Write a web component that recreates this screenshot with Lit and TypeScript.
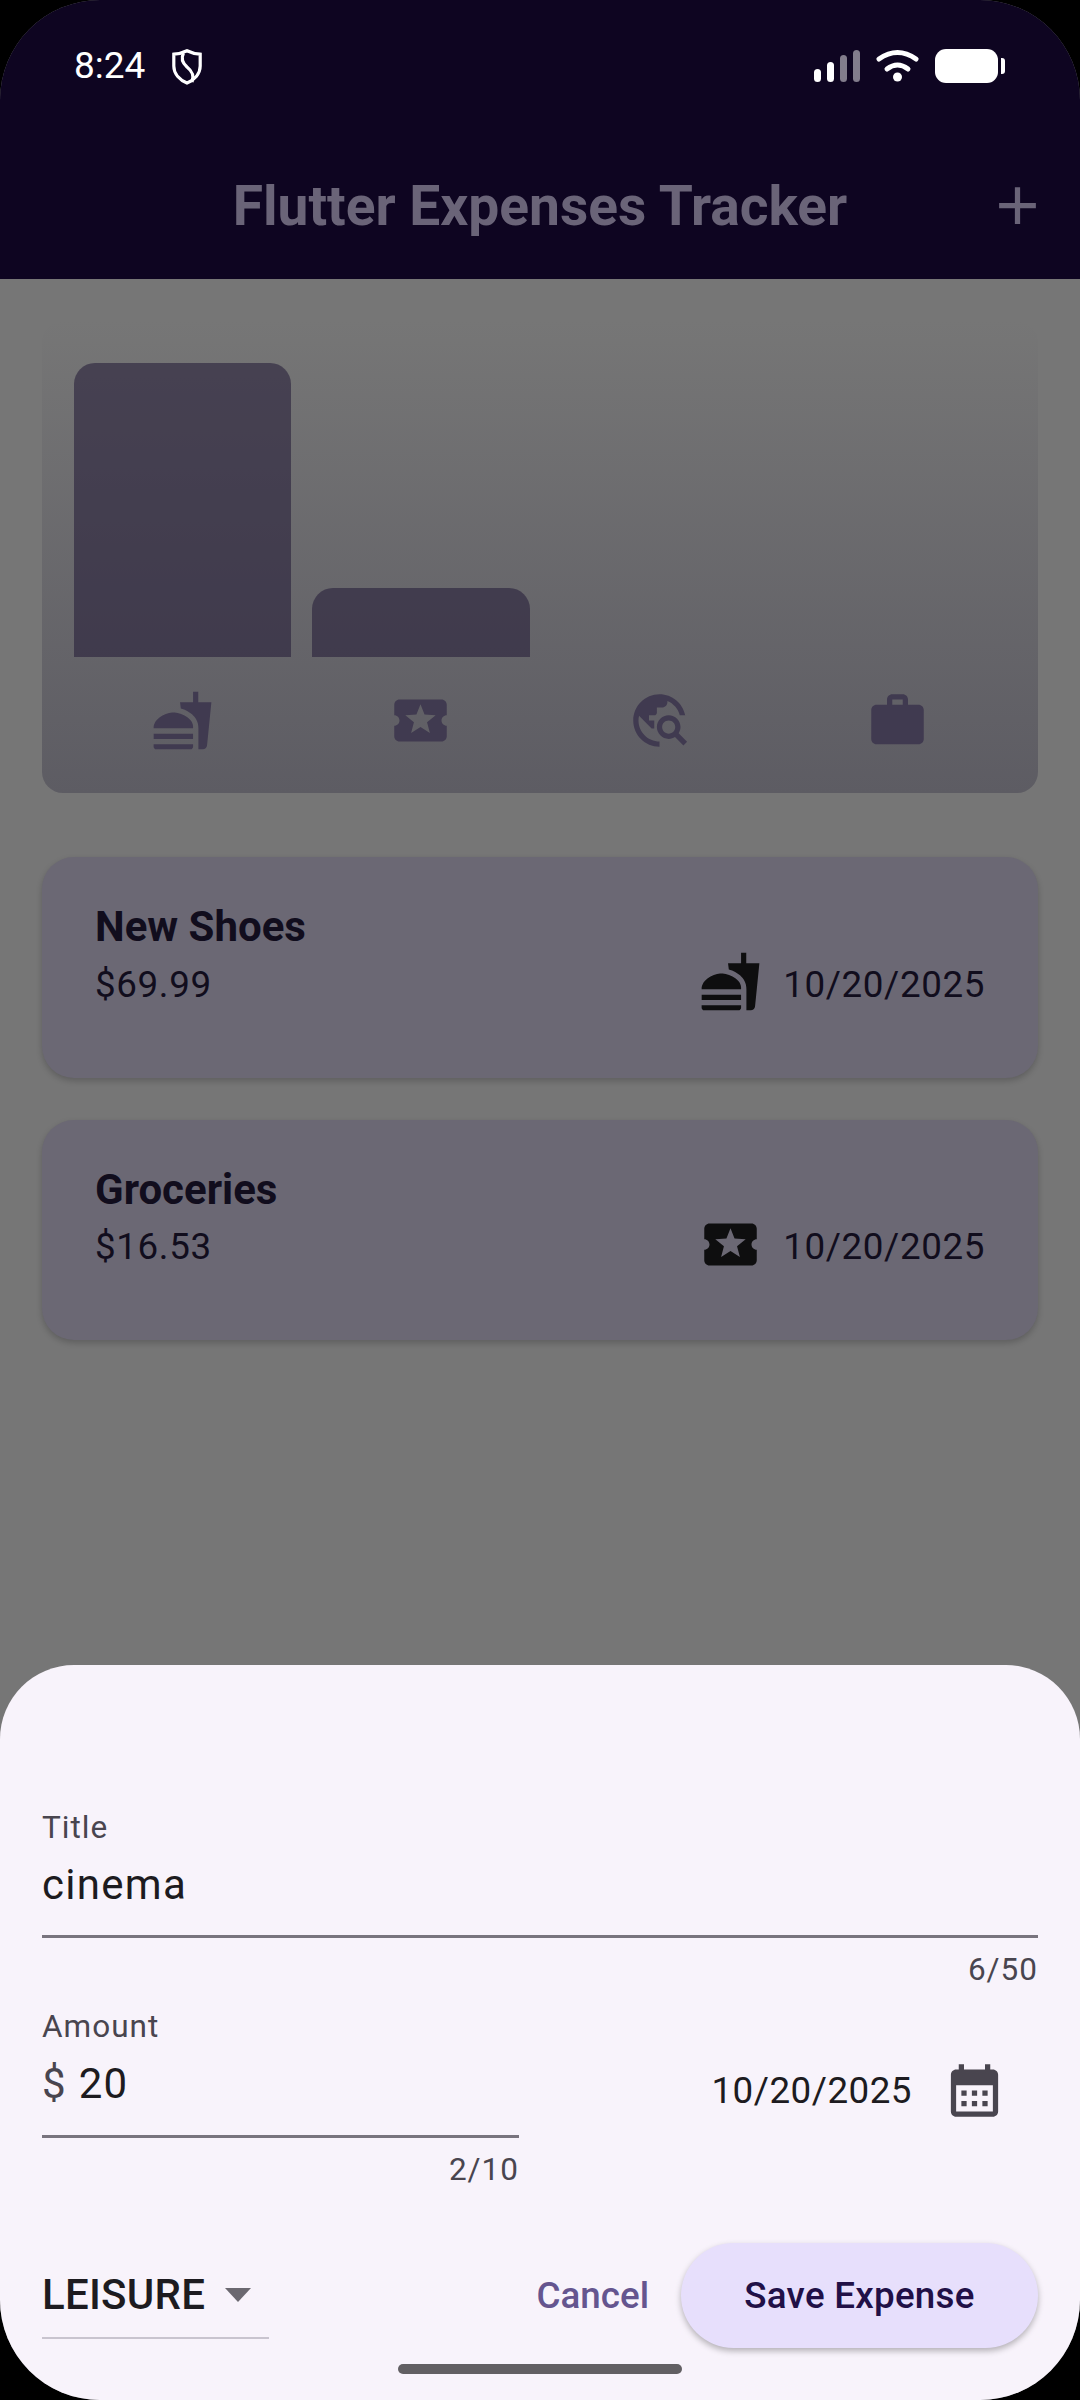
import { LitElement, html, css, svg } from 'lit';
import { customElement } from 'lit/decorators.js';

const ICONS = {
  food: 'M18.06 22.99h1.66c.84 0 1.53-.64 1.63-1.46L23 5.05h-5V1h-1.97v4.05h-4.97l.3 2.34c1.71.47 3.31 1.32 4.27 2.26 1.44 1.42 2.43 2.89 2.43 5.29v8.05zM1 21.99V21h15.03v.99c0 .55-.45 1-1.01 1H2.01c-.56 0-1.01-.45-1.01-1zm15.03-7c.5-4-5-6-7.52-6C5.99 8.99 1 11 1 14.99h15.03zM1.02 17h15v2h-15z',
  leisure: 'M20 12c0-1.1.9-2 2-2V6c0-1.1-.9-2-2-2H4c-1.1 0-1.99.9-1.99 2v4c1.1 0 1.99.9 1.99 2s-.89 2-2 2v4c0 1.1.9 2 2 2h16c1.1 0 2-.9 2-2v-4c-1.1 0-2-.9-2-2zm-4.42 4.8L12 14.5l-3.58 2.3 1.08-4.12-3.29-2.69 4.24-.25L12 5.8l1.54 3.95 4.24.25-3.29 2.69 1.09 4.11z',
  travel: 'M19.3 16.9c.4-.7.7-1.5.7-2.4 0-2.5-2-4.5-4.5-4.5S11 12 11 14.5s2 4.5 4.5 4.5c.9 0 1.7-.3 2.4-.7l3.2 3.2 1.4-1.4-3.2-3.2zm-3.8.1c-1.4 0-2.5-1.1-2.5-2.5s1.1-2.5 2.5-2.5 2.5 1.1 2.5 2.5-1.1 2.5-2.5 2.5zM12 20v2C6.48 22 2 17.52 2 12S6.48 2 12 2c4.84 0 8.87 3.44 9.8 8h-2.07c-.64-2.46-2.4-4.47-4.73-5.41V5c0 1.1-.9 2-2 2h-2v2c0 .55-.45 1-1 1H8v2h2v3H9l-4.79-4.79C4.08 10.79 4 11.38 4 12c0 4.41 3.59 8 8 8z',
  work: 'M20 6h-4V4c0-1.11-.89-2-2-2h-4c-1.11 0-2 .89-2 2v2H4c-1.11 0-1.99.89-1.99 2L2 19c0 1.11.89 2 2 2h16c1.11 0 2-.89 2-2V8c0-1.11-.89-2-2-2zm-6 0h-4V4h4v2z',
  calendar: 'M19 4h-1V2h-2v2H8V2H6v2H5C3.89 4 3.01 4.9 3.01 6L3 20c0 1.1.89 2 2 2h14c1.1 0 2-.9 2-2V6c0-1.1-.9-2-2-2zm0 16H5V10h14v10zM9 14H7v-2h2v2zm4 0h-2v-2h2v2zm4 0h-2v-2h2v2zM9 18H7v-2h2v2zm4 0h-2v-2h2v2zm4 0h-2v-2h2v2z',
  add: 'M19 13h-6v6h-2v-6H5v-2h6V5h2v6h6v2z',
};

type IconName = keyof typeof ICONS;

const icon = (name: IconName) =>
  html`<svg class="icon" viewBox="0 0 24 24" fill="currentColor">${svg`<path d=${ICONS[name]}></path>`}</svg>`;

const CATEGORIES: { name: IconName; height: number }[] = [
  { name: 'food', height: 294 },
  { name: 'leisure', height: 69 },
  { name: 'travel', height: 0 },
  { name: 'work', height: 0 },
];

const EXPENSES: { title: string; amount: string; date: string; category: IconName }[] = [
  { title: 'New Shoes', amount: '$69.99', date: '10/20/2025', category: 'food' },
  { title: 'Groceries', amount: '$16.53', date: '10/20/2025', category: 'leisure' },
];

@customElement('app-root')
export class AppRoot extends LitElement {
  static styles = css`
    :host {
      display: block;
      width: 1080px;
      height: 2400px;
      background: #000;
      font-family: Roboto, 'Liberation Sans', sans-serif;
    }
    .screen {
      position: relative;
      width: 1080px;
      height: 2400px;
      border-radius: 100px;
      overflow: hidden;
      background: #767676;
    }
    .icon {
      display: block;
      width: 63px;
      height: 63px;
      flex: none;
    }

    .appbar {
      height: 279px;
      background: #0e0521;
    }
    .status {
      height: 132px;
      box-sizing: border-box;
      padding: 49px 75px 0 74px;
      display: flex;
      align-items: flex-start;
      color: #fff;
    }
    .time {
      font-size: 37px;
      line-height: 34px;
      width: 98px;
    }
    .status-right {
      margin-left: auto;
      display: flex;
      gap: 16px;
      align-items: flex-start;
    }
    .signal {
      display: flex;
      align-items: flex-end;
      gap: 6px;
      height: 33px;
    }
    .signal i {
      display: block;
      width: 7px;
      border-radius: 4px;
      background: #fff;
    }
    .signal i.off {
      background: #827d8c;
    }
    .battery {
      display: flex;
      align-items: center;
      height: 34px;
      gap: 3px;
    }
    .battery b {
      display: block;
      width: 63px;
      height: 34px;
      border-radius: 11px;
      background: #fff;
    }
    .battery i {
      display: block;
      width: 4px;
      height: 16px;
      border-radius: 0 3px 3px 0;
      background: #fff;
    }
    .toolbar {
      position: relative;
      height: 147px;
      display: flex;
      align-items: center;
      justify-content: center;
      color: #6a6478;
    }
    .toolbar h1 {
      margin: 0;
      font-size: 55.125px;
      font-weight: 700;
      line-height: 70px;
    }
    .action {
      position: absolute;
      right: 31px;
      top: 42px;
    }

    .content {
      padding: 42px 42px 0;
    }
    .chart {
      height: 472px;
      box-sizing: border-box;
      padding: 42px 21px 0;
      border-radius: 21px;
      background: linear-gradient(to bottom, #767676, #5d5c63);
      display: flex;
    }
    .col {
      flex: 1;
      display: flex;
      flex-direction: column;
      align-items: center;
      color: #403a50;
    }
    .bar-slot {
      height: 294px;
      align-self: stretch;
      display: flex;
      align-items: flex-end;
      padding: 0 10.5px;
      margin-bottom: 32px;
    }
    .bar {
      flex: 1;
      background: rgba(40, 32, 58, 0.6);
      border-radius: 21px 21px 0 0;
    }

    .cards {
      margin-top: 64px;
      display: flex;
      flex-direction: column;
      gap: 42px;
    }
    .card {
      height: 220.5px;
      box-sizing: border-box;
      padding: 45px 53px 0;
      border-radius: 32px;
      background: #6b6874;
      box-shadow: 0 3px 6px rgba(0, 0, 0, 0.2);
      color: #110d1d;
    }
    .card-title {
      font-size: 42px;
      font-weight: 700;
      line-height: 49px;
    }
    .card-row {
      display: flex;
      align-items: center;
      height: 63px;
      margin-top: 1.5px;
      font-size: 36.75px;
      letter-spacing: 0.62px;
    }
    .card-row .icon {
      margin-left: auto;
      margin-right: 21.5px;
      margin-top: -5px;
      color: #0e0e0f;
    }

    .sheet {
      position: absolute;
      left: 0;
      right: 0;
      bottom: 0;
      height: 735px;
      box-sizing: border-box;
      padding: 143px 42px 0;
      background: #f8f3fb;
      border-radius: 74px 74px 0 0;
      color: #1d1b20;
    }
    .label,
    .counter {
      font-size: 31.5px;
      line-height: 40px;
      letter-spacing: 1px;
      color: #49454f;
    }
    .counter {
      margin-top: 12px;
      text-align: right;
    }
    .value {
      font-size: 42px;
      line-height: 56px;
      letter-spacing: 1.3px;
      border-bottom: 3px solid #79747e;
      margin-top: 9px;
      padding-bottom: 22px;
    }
    .value.amount {
      margin-top: 9px;
      padding-bottom: 23px;
    }
    .value .prefix {
      color: #49454f;
    }
    .title-field {
      margin-bottom: 17px;
    }
    .amount-row {
      display: flex;
    }
    .amount-field {
      width: 477px;
    }
    .date-picker {
      flex: 1;
      padding: 52px 32px 0 0;
      display: flex;
      justify-content: flex-end;
      align-items: flex-start;
      gap: 31px;
      height: 63px;
      line-height: 63px;
      font-size: 36.75px;
      letter-spacing: 0.5px;
    }
    .date-picker .icon {
      color: #49454f;
    }
    .actions {
      margin-top: 53px;
      display: flex;
      align-items: flex-start;
    }
    .dropdown {
      width: 227px;
      margin-top: 24px;
      border-bottom: 2px solid #c9c4cf;
      padding-bottom: 14px;
      display: flex;
      align-items: center;
      gap: 19.5px;
      font-size: 42px;
      line-height: 56px;
      font-weight: 500;
      letter-spacing: 0.25px;
    }
    .dropdown svg {
      width: 26px;
      height: 14px;
      fill: #6b6870;
    }
    .cancel {
      margin-left: auto;
      margin-right: 32px;
      line-height: 105px;
      font-size: 36.75px;
      font-weight: 500;
      color: #65558f;
    }
    .save {
      width: 357px;
      height: 105px;
      border-radius: 53px;
      background: #e7dffc;
      box-shadow: 0 3px 6px rgba(0, 0, 0, 0.28);
      text-align: center;
      line-height: 105px;
      font-size: 36.75px;
      font-weight: 500;
      letter-spacing: 0.26px;
      color: #211047;
    }
    .home {
      position: absolute;
      left: 398px;
      top: 2364px;
      width: 284px;
      height: 10px;
      border-radius: 5px;
      background: #625f63;
    }
  `;

  render() {
    return html`
      <div class="screen">
        <div class="appbar">
          <div class="status">
            <div class="time">8:24</div>
            <svg width="30" height="36" viewBox="0 0 30 36" fill="none" stroke="#fff" stroke-width="3.2">
              <path d="M15 1.8 C19 3.8 24 5 28.2 5.2 V17 C28.2 25 22 31 15 34 C8 31 1.8 25 1.8 17 V5.2 C6 5 11 3.8 15 1.8 Z"></path>
              <path d="M11.5 4 C9 9 10.5 14 15 18 C20 22 22.5 26 20 33"></path>
            </svg>
            <div class="status-right">
              <div class="signal">
                <i style="height:13px"></i>
                <i style="height:20px"></i>
                <i class="off" style="height:27px"></i>
                <i class="off" style="height:32px"></i>
              </div>
              <svg width="43" height="33" viewBox="0 0 43 33" fill="none" stroke="#fff" stroke-width="5" stroke-linecap="round">
                <path d="M3 10 Q21.5 -3 40 10"></path>
                <path d="M11 20 Q21.5 12 32 20"></path>
                <circle cx="21.5" cy="28" r="4.5" fill="#fff" stroke="none"></circle>
              </svg>
              <div class="battery"><b></b><i></i></div>
            </div>
          </div>
          <div class="toolbar">
            <h1>Flutter Expenses Tracker</h1>
            <div class="action">${icon('add')}</div>
          </div>
        </div>

        <div class="content">
          <div class="chart">
            ${CATEGORIES.map(
              (c) => html`
                <div class="col">
                  <div class="bar-slot">
                    ${c.height ? html`<div class="bar" style="height:${c.height}px"></div>` : ''}
                  </div>
                  ${icon(c.name)}
                </div>
              `,
            )}
          </div>
          <div class="cards">
            ${EXPENSES.map(
              (e) => html`
                <div class="card">
                  <div class="card-title">${e.title}</div>
                  <div class="card-row">
                    <span>${e.amount}</span>
                    ${icon(e.category)}
                    <span>${e.date}</span>
                  </div>
                </div>
              `,
            )}
          </div>
        </div>

        <div class="sheet">
          <div class="title-field">
            <div class="label">Title</div>
            <div class="value">cinema</div>
            <div class="counter">6/50</div>
          </div>
          <div class="amount-row">
            <div class="amount-field">
              <div class="label">Amount</div>
              <div class="value amount"><span class="prefix">$ </span>20</div>
              <div class="counter">2/10</div>
            </div>
            <div class="date-picker">
              <span>10/20/2025</span>
              ${icon('calendar')}
            </div>
          </div>
          <div class="actions">
            <div class="dropdown">
              <span>LEISURE</span>
              <svg viewBox="0 0 26 14"><path d="M0 0h26L13 14z"></path></svg>
            </div>
            <div class="cancel">Cancel</div>
            <div class="save">Save Expense</div>
          </div>
        </div>
        <div class="home"></div>
      </div>
    `;
  }
}
